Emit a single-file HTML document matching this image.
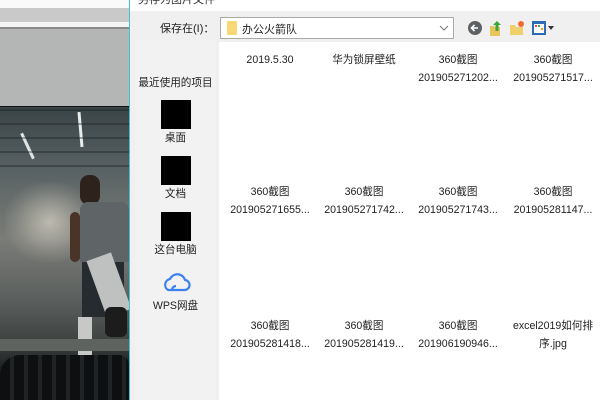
<!DOCTYPE html>
<html><head><meta charset="utf-8"><style>
*{margin:0;padding:0;box-sizing:border-box}
body{width:600px;height:400px;overflow:hidden;position:relative;background:#fff;font-family:"Liberation Sans","Noto Sans CJK SC",sans-serif;font-size:12px;color:#222}
.a{position:absolute}
.cell{position:absolute;width:94px;text-align:center;font-size:10.6px;line-height:18px;color:#222;white-space:nowrap}
.side{position:absolute;left:135px;width:81px;text-align:center;font-size:10.6px;color:#222}
.blk{position:absolute;left:161px;width:30px;height:29px;background:#000}
</style></head><body>
<div class="a" style="left:0;top:0;width:129px;height:8px;background:#fafafa"></div>
<div class="a" style="left:0;top:8px;width:129px;height:14px;background:#c9c9c9"></div>
<div class="a" style="left:0;top:22px;width:129px;height:5px;background:#f4f4f4"></div>
<div class="a" style="left:0;top:27px;width:129px;height:2px;background:#888"></div>
<div class="a" style="left:0;top:29px;width:129px;height:77px;background:#b4b5b5"></div>
<div class="a" style="left:0;top:106px;width:129px;height:1px;background:#111"></div>
<div class="a" style="left:0;top:107px;width:129px;height:293px;overflow:hidden;background:linear-gradient(180deg,#3a4346 0%,#566062 20%,#7a7c78 45%,#5c605e 65%,#3e4342 80%,#1a1c1e 90%,#121314 100%)">
  <div class="a" style="left:5px;top:75px;width:90px;height:80px;background:radial-gradient(ellipse at center,rgba(220,215,200,.7),rgba(180,175,165,.25) 55%,rgba(0,0,0,0) 75%)"></div>
  <div class="a" style="left:79px;top:5px;width:3px;height:35px;background:#e8ecea;transform:rotate(-5deg)"></div>
  <div class="a" style="left:26px;top:25px;width:3px;height:28px;background:#e0e4e2;transform:rotate(-25deg)"></div>
  <div class="a" style="left:0;top:0;width:129px;height:60px;background:repeating-linear-gradient(0deg,rgba(20,25,28,.35) 0 2px,rgba(0,0,0,0) 2px 14px)"></div>
  <div class="a" style="left:80px;top:68px;width:20px;height:30px;border-radius:9px;background:#2e221c"></div>
  <div class="a" style="left:80px;top:95px;width:49px;height:60px;background:#5f6566;border-radius:8px 8px 0 0"></div>
  <div class="a" style="left:70px;top:105px;width:10px;height:50px;background:#4a3428;border-radius:5px"></div>
  <div class="a" style="left:82px;top:155px;width:42px;height:55px;background:#262b2f"></div>
  <div class="a" style="left:96px;top:148px;width:26px;height:60px;background:#bfc0c0;transform:rotate(-20deg)"></div>
  <div class="a" style="left:78px;top:210px;width:14px;height:45px;background:#c8c8c6"></div>
  <div class="a" style="left:105px;top:200px;width:22px;height:30px;background:#1c1c1c;border-radius:6px"></div>
  <div class="a" style="left:0;top:232px;width:129px;height:12px;background:#5f6360"></div>
  <div class="a" style="left:0;top:248px;width:129px;height:45px;background:repeating-linear-gradient(90deg,#0e0f10 0 10px,#202326 10px 14px);border-radius:20px 10px 0 0"></div>
</div>
<div class="a" style="left:129px;top:0;width:1px;height:400px;background:#3fc5cf"></div>
<div class="a" style="left:130px;top:0;width:470px;height:400px;background:#f0f0f0"></div>
<div class="a" style="left:130px;top:0;width:470px;height:11px;background:#fff;overflow:hidden"><div style="position:absolute;left:8px;top:-9px;font-size:11px;color:#333">另存为图片文件</div></div>
<div class="a" style="left:160px;top:20px;font-size:11px;color:#222">保存在(I)：</div>
<div class="a" style="left:220px;top:17px;width:234px;height:22px;background:#fff;border:1px solid #a9a9a9"></div>
<div class="a" style="left:227px;top:21px;width:10px;height:14px;background:#f8d775;border-radius:1px"></div>
<div class="a" style="left:242px;top:21px;font-size:11px;color:#222">办公火箭队</div>
<svg class="a" style="left:439px;top:24px" width="10" height="8"><path d="M1 2 L5 6 L9 2" stroke="#777" fill="none"/></svg>
<svg class="a" style="left:466px;top:19px" width="90" height="18">
<circle cx="9" cy="9" r="7" fill="#5d6163"/><path d="M12 9H6M8.5 6L5.5 9L8.5 12" stroke="#fff" stroke-width="1.6" fill="none"/>
<path d="M24 7h4l1 1h5v9h-10z" fill="#e8c55a"/><path d="M31 2l4 4h-2.5v6h-3v-6h-2.5z" fill="#3aa53a"/>
<path d="M44 6h5l1 2h7v8h-13z" fill="#f1cf6b"/><circle cx="55" cy="5" r="3" fill="#f06a30"/>
<rect x="66" y="2" width="14" height="14" fill="#2d6bb8"/><rect x="68" y="5" width="10" height="9" fill="#fff"/><rect x="69" y="6" width="2" height="2" fill="#e44"/><rect x="72" y="6" width="2" height="2" fill="#4a4"/><rect x="75" y="9" width="2" height="2" fill="#e90"/>
<path d="M82 7h6l-3 4z" fill="#333"/>
</svg>
<div class="a" style="left:135px;top:40px;width:81px;height:360px;background:#f2f2f2"></div>
<div class="side" style="top:75px">最近使用的项目</div>
<div class="blk" style="top:100px"></div><div class="side" style="top:130px">桌面</div>
<div class="blk" style="top:156px"></div><div class="side" style="top:186px">文档</div>
<div class="blk" style="top:212px"></div><div class="side" style="top:242px">这台电脑</div>
<svg class="a" style="left:160px;top:270px" width="32" height="24"><path d="M8 20h16a5 5 0 0 0 1-10a8 8 0 0 0-15-1a6 6 0 0 0-2 11z M12 20a4 4 0 0 1 4-4" stroke="#3b82f0" stroke-width="2.2" fill="none" stroke-linejoin="round"/></svg>
<div class="side" style="top:298px">WPS网盘</div>
<div class="a" style="left:219px;top:42px;width:381px;height:358px;background:#fff"></div>
<div class="cell" style="left:223px;top:51px">2019.5.30</div>
<div class="cell" style="left:317px;top:51px">华为锁屏壁纸</div>
<div class="cell" style="left:411px;top:51px">360截图<br>201905271202...</div>
<div class="cell" style="left:506px;top:51px">360截图<br>201905271517...</div>
<div class="cell" style="left:223px;top:183px">360截图<br>201905271655...</div>
<div class="cell" style="left:317px;top:183px">360截图<br>201905271742...</div>
<div class="cell" style="left:411px;top:183px">360截图<br>201905271743...</div>
<div class="cell" style="left:506px;top:183px">360截图<br>201905281147...</div>
<div class="cell" style="left:223px;top:317px">360截图<br>201905281418...</div>
<div class="cell" style="left:317px;top:317px">360截图<br>201905281419...</div>
<div class="cell" style="left:411px;top:317px">360截图<br>201906190946...</div>
<div class="cell" style="left:506px;top:317px">excel2019如何排<br>序.jpg</div>
</body></html>
